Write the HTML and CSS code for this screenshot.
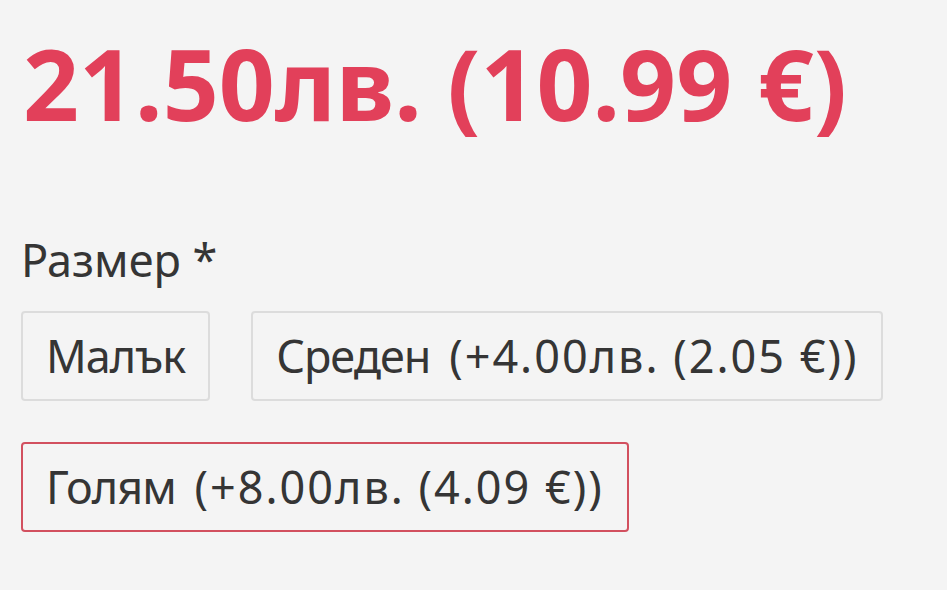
FILE: index.html
```html
<!DOCTYPE html>
<html lang="bg">
<head>
<meta charset="UTF-8">
<meta name="viewport" content="width=device-width, initial-scale=1.0">
<title>Размер</title>
<link rel="stylesheet" href="styles.css">
</head>
<body>
<div class="product">
    <div class="price">21.50лв. (10.99 €)</div>
    <div class="option">
        <div class="option-label">Размер *</div>
        <div class="choices">
            <button class="choice">Малък</button>
            <button class="choice">Среден <span class="extra">(+4.00лв. (2.05 €))</span></button>
            <button class="choice selected">Голям <span class="extra">(+8.00лв. (4.09 €))</span></button>
        </div>
    </div>
</div>
</body>
</html>
```

FILE: styles.css
```css
body {
    font-family: "Noto Sans", sans-serif;
    background-color: #f4f4f4;
    color: #353535;
    margin: 0;
    padding: 0;
}

.product {
    padding: 25px 21px;
}

.price {
    color: #e2405a;
    font-size: 98px;
    font-weight: bold;
    line-height: 1.2;
    padding-left: 2px;
}

.option {
    margin-top: 90px;
}

.option-label {
    font-size: 45px;
    line-height: 1.2;
    margin-bottom: 24px;
}

.choices {
    display: flex;
    flex-wrap: wrap;
    gap: 41px;
}

.choice {
    font-family: inherit;
    font-size: 45px;
    letter-spacing: -1px;
    color: #353535;
    background-color: #f4f4f4;
    border: 2px solid #dcdcdc;
    border-radius: 4px;
    padding: 8px 23px;
    line-height: 70px;
}

.choice .extra {
    margin-left: 8px;
    letter-spacing: 2px;
}

.selected {
    border-color: #d2505f;
}
```
